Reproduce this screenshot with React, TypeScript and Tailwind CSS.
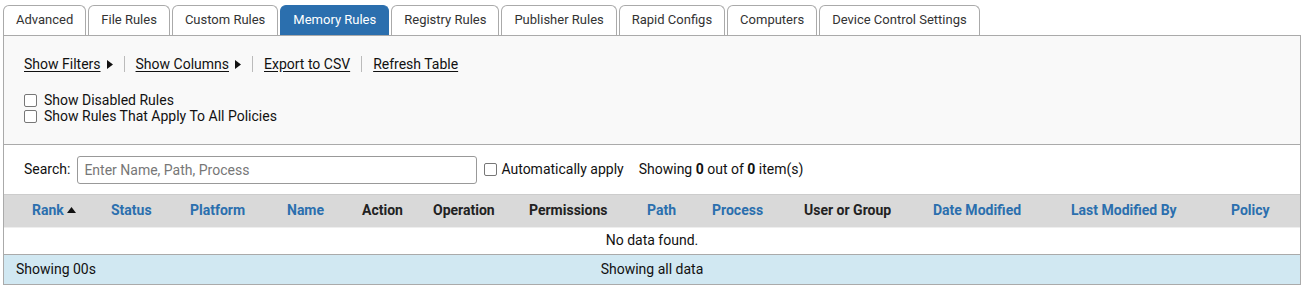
import { useState } from "react";

const tabs = [
  "Advanced",
  "File Rules",
  "Custom Rules",
  "Memory Rules",
  "Registry Rules",
  "Publisher Rules",
  "Rapid Configs",
  "Computers",
  "Device Control Settings",
];

// label, column width, sortable (blue)
const columns: [string, string, boolean][] = [
  ["Rank", "w-[107px] pl-[28px]", true],
  ["Status", "w-[79px]", true],
  ["Platform", "w-[97px]", true],
  ["Name", "w-[75px]", true],
  ["Action", "w-[71px]", false],
  ["Operation", "w-[96px]", false],
  ["Permissions", "w-[118px]", false],
  ["Path", "w-[65px]", true],
  ["Process", "w-[92px]", true],
  ["User or Group", "w-[129px]", false],
  ["Date Modified", "w-[138px]", true],
  ["Last Modified By", "w-[160px]", true],
  ["Policy", "flex-1", true],
];

const Caret = () => (
  <svg width="6" height="9" viewBox="0 0 6 9" className="ml-[6px] inline-block">
    <path d="M0 0 L6 4.5 L0 9 Z" fill="#111" />
  </svg>
);

const Box = ({ className = "" }: { className?: string }) => (
  <span className={"w-[13px] h-[13px] border border-[#777] rounded-[2px] bg-white " + className} />
);

export default function App() {
  const [active] = useState("Memory Rules");

  return (
    <div className="bg-white w-[1306px] h-[290px] pt-[5px] pl-[3px] pr-[5px] text-[14px] text-[#111]" style={{ fontFamily: "Roboto, 'Liberation Sans', sans-serif" }}>
      {/* Tabs */}
      <div className="flex gap-[2px] h-[30px] text-[13px]">
        {tabs.map((t) => (
          <div
            key={t}
            className={
              t === active
                ? "px-[12px] pb-[2px] flex items-center rounded-t-[6px] bg-[#2b6fae] text-white border border-[#2b6fae] border-b-0"
                : "px-[12px] pb-[2px] flex items-center rounded-t-[6px] bg-white text-[#333] border border-[#aaa] border-b-0"
            }
          >
            {t}
          </div>
        ))}
      </div>

      <div className="border border-[#aaa]">
        {/* Filters */}
        <div className="bg-[#f9f9f9] border-b border-[#aaa] h-[109px] pl-[20px] pt-[19px]">
          <div className="flex items-center h-[18px]">
            <span className="underline underline-offset-2">Show Filters</span>
            <Caret />
            <span className="w-px h-[16px] bg-[#bbb] mx-[11px]" />
            <span className="underline underline-offset-2">Show Columns</span>
            <Caret />
            <span className="w-px h-[16px] bg-[#bbb] mx-[11px]" />
            <span className="underline underline-offset-2">Export to CSV</span>
            <span className="w-px h-[16px] bg-[#bbb] mx-[11px]" />
            <span className="underline underline-offset-2">Refresh Table</span>
          </div>
          <div className="mt-[19px] flex flex-col">
            <label className="flex items-center h-[16px]">
              <Box className="mr-[7px]" />
              Show Disabled Rules
            </label>
            <label className="flex items-center h-[16px]">
              <Box className="mr-[7px]" />
              Show Rules That Apply To All Policies
            </label>
          </div>
        </div>

        {/* Search */}
        <div className="h-[49px] flex items-center pl-[20px]">
          <span className="mr-[7px]">Search:</span>
          <input
            className="w-[400px] h-[28px] border border-[#999] rounded-[3px] px-[6px] text-[14px] placeholder:text-[#777] outline-none"
            placeholder="Enter Name, Path, Process"
          />
          <Box className="ml-[7px] mr-[4px]" />
          <span>Automatically apply</span>
          <span className="ml-[15px]">
            Showing <b>0</b> out of <b>0</b> item(s)
          </span>
        </div>

        {/* Header */}
        <div className="flex h-[33px] pb-[2px] items-center bg-[#d9d9d9] border-t border-[#ccc] font-bold">
          {columns.map(([label, w, blue]) => (
            <div key={label} className={w + (blue ? " text-[#2b6fae]" : " text-[#222]")}>
              {label}
              {label === "Rank" && (
                <svg width="9" height="6" viewBox="0 0 9 6" className="ml-[3px] inline-block align-[2px]">
                  <path d="M0 6 L4.5 0 L9 6 Z" fill="#111" />
                </svg>
              )}
            </div>
          ))}
        </div>

        <div className="h-[27px] pb-[2px] flex items-center justify-center border-t border-[#eee]">
          No data found.
        </div>

        {/* Footer */}
        <div className="h-[30px] flex items-center bg-[#d1e8f2] border-t border-[#aaa] relative">
          <span className="pl-[12px] w-[200px]">Showing 00s</span>
          <span className="absolute left-0 right-0 text-center pointer-events-none">Showing all data</span>
        </div>
      </div>
    </div>
  );
}
